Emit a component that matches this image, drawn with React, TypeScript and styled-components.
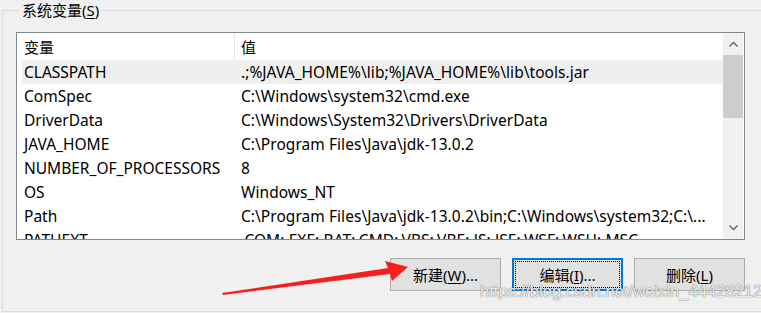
import React from "react";
import styled, { createGlobalStyle } from "styled-components";

const GlobalStyle = createGlobalStyle`
  html, body {
    margin: 0;
    padding: 0;
    background: #f0f0f0;
    overflow: hidden;
  }
  body {
    font-family: "Noto Sans", "Noto Sans CJK SC", sans-serif;
  }
`;

const Page = styled.div`
  position: relative;
  width: 761px;
  height: 313px;
  overflow: hidden;
  background: #f0f0f0;
  color: #000;
  font-family: "Noto Sans", "Noto Sans CJK SC", sans-serif;
  font-size: 15px;
`;

const Group = styled.fieldset`
  box-sizing: border-box;
  margin: 0 0 0 2px;
  padding: 0 0 0 13px;
  width: 800px;
  height: 312px;
  border: 1px solid #dcdcdc;
  min-width: 0;
`;

const Legend = styled.legend`
  margin-left: 4px;
  padding: 0 2px;
  font-size: 15px;
  line-height: 20px;
  height: 20px;
  color: #000;
`;

const Underline = styled.span`
  text-decoration: underline;
  text-underline-offset: 2px;
  text-decoration-thickness: 1px;
`;

const ListBox = styled.div`
  box-sizing: border-box;
  margin-top: 12px;
  width: 729px;
  height: 208px;
  border: 1px solid #828790;
  background: #fff;
  display: grid;
  grid-template-columns: 706px 20px;
  padding-right: 1px;
  overflow: hidden;
`;

const ListArea = styled.div`
  display: flex;
  flex-direction: column;
  overflow: hidden;
`;

const Header = styled.div`
  display: grid;
  grid-template-columns: 217px 1px 1fr;
  height: 27px;
  flex: none;
  background: #fff;
`;

const HeaderCell = styled.div<{ $pad: number }>`
  display: flex;
  align-items: center;
  padding-left: ${(p) => p.$pad}px;
  font-size: 15px;
  line-height: 20px;
`;

const HeaderDivider = styled.div`
  background: #e5e5e5;
  margin-bottom: 1px;
`;

const Row = styled.div<{ $selected?: boolean }>`
  display: grid;
  grid-template-columns: 213px 1fr;
  height: 24px;
  flex: none;
  margin-left: 5px;
  align-items: center;
  white-space: nowrap;
  font-size: 15.5px;
  background: ${(p) => (p.$selected ? "#efefef" : "transparent")};
`;

const NameCell = styled.div`
  padding-left: 2px;
  line-height: 24px;
  overflow: hidden;
`;

const ValueCell = styled.div`
  padding-left: 6px;
  line-height: 24px;
  letter-spacing: 0.05px;
  overflow: hidden;
`;

const ScrollBar = styled.div`
  background: #f0f0f0;
  display: grid;
  grid-template-rows: 22px 63px 1fr 22px;
`;

const ScrollArrow = styled.div`
  display: flex;
  align-items: center;
  justify-content: center;
`;

const Thumb = styled.div`
  background: #cdcdcd;
`;

const ButtonRow = styled.div`
  display: flex;
  justify-content: flex-end;
  gap: 11px;
  width: 729px;
  margin-top: 18px;
`;

const Button = styled.button<{ $focused?: boolean }>`
  box-sizing: border-box;
  width: 111px;
  height: 33px;
  margin: 0;
  padding: 0;
  background: #e1e1e1;
  border: ${(p) => (p.$focused ? "2px solid #0078d7" : "1px solid #adadad")};
  outline: ${(p) => (p.$focused ? "1px dotted #000" : "none")};
  outline-offset: -4px;
  font-family: "Noto Sans", "Noto Sans CJK SC", sans-serif;
  font-size: 15px;
  color: #000;
  display: flex;
  align-items: center;
  justify-content: center;
`;

const Arrow = styled.svg`
  position: absolute;
  left: 0;
  top: 0;
  pointer-events: none;
`;

const Watermark = styled.div`
  position: absolute;
  left: 480px;
  top: 282px;
  font-family: "Liberation Sans", Arial, sans-serif;
  font-size: 16.6px;
  line-height: 20px;
  color: rgba(255, 255, 255, 0.9);
  text-shadow: 0 0 1px rgba(90, 90, 90, 0.9), 0 0 1px rgba(90, 90, 90, 0.6);
  white-space: nowrap;
  pointer-events: none;
`;

const rows: [string, string][] = [
  ["CLASSPATH", ".;%JAVA_HOME%\\lib;%JAVA_HOME%\\lib\\tools.jar"],
  ["ComSpec", "C:\\Windows\\system32\\cmd.exe"],
  ["DriverData", "C:\\Windows\\System32\\Drivers\\DriverData"],
  ["JAVA_HOME", "C:\\Program Files\\Java\\jdk-13.0.2"],
  ["NUMBER_OF_PROCESSORS", "8"],
  ["OS", "Windows_NT"],
  ["Path", "C:\\Program Files\\Java\\jdk-13.0.2\\bin;C:\\Windows\\system32;C:\\..."],
  ["PATHEXT", ".COM;.EXE;.BAT;.CMD;.VBS;.VBE;.JS;.JSE;.WSF;.WSH;.MSC"],
];

const Chevron = ({ up }: { up?: boolean }) => (
  <svg width="9" height="6" viewBox="0 0 9 6">
    <path
      d={up ? "M0.5 5.5 L4.5 1.5 L8.5 5.5" : "M0.5 0.5 L4.5 4.5 L8.5 0.5"}
      fill="none"
      stroke="#606060"
      strokeWidth="1.3"
    />
  </svg>
);

export default function App() {
  return (
    <Page>
      <GlobalStyle />
      <Group>
        <Legend>
          系统变量(<Underline>S</Underline>)
        </Legend>
        <ListBox>
          <ListArea>
            <Header>
              <HeaderCell $pad={7}>变量</HeaderCell>
              <HeaderDivider />
              <HeaderCell $pad={6}>值</HeaderCell>
            </Header>
            {rows.map(([name, value], i) => (
              <Row key={name} $selected={i === 0}>
                <NameCell>{name}</NameCell>
                <ValueCell>{value}</ValueCell>
              </Row>
            ))}
          </ListArea>
          <ScrollBar>
            <ScrollArrow>
              <Chevron up />
            </ScrollArrow>
            <Thumb />
            <div />
            <ScrollArrow>
              <Chevron />
            </ScrollArrow>
          </ScrollBar>
        </ListBox>
        <ButtonRow>
          <Button>
            新建(<Underline>W</Underline>)...
          </Button>
          <Button $focused>
            编辑(<Underline>I</Underline>)...
          </Button>
          <Button>
            删除(<Underline>L</Underline>)
          </Button>
        </ButtonRow>
      </Group>
      <Watermark>https://blog.csdn.net/weixin_44428212</Watermark>
      <Arrow width="761" height="313" viewBox="0 0 761 313">
        <polygon
          points="222,293 388,268 385,261 408,267 392,281 390,274 223,295"
          fill="#f5201c"
        />
      </Arrow>
    </Page>
  );
}
